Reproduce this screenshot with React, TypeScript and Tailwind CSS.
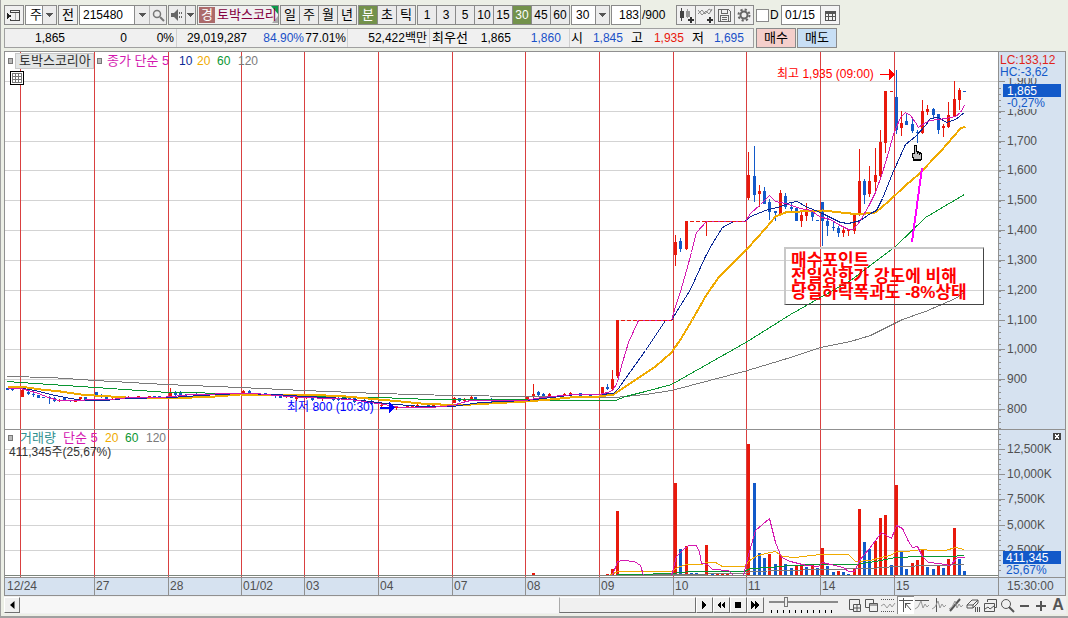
/**
 * Intraday stock chart window: period toolbar, quote strip, price/volume panes and the
 * scroll bar with drawing tools under them.
 */

import type { ReactNode } from 'react';

type Point = [number, number];
// x, high, body top, body bottom, low, up?
type Candle = [number, number, number, number, number, 0 | 1];

const UP = '#e8190c';
const DOWN = '#1259c9';
const MAGENTA = '#d419b0';
const NAVY = '#0a2896';
const GOLD = '#f0aa00';
const GREEN = '#0a9632';
const GRAY = '#7a7a7a';

const PRICES = [1900, 1800, 1700, 1600, 1500, 1400, 1300, 1200, 1100, 1000, 900, 800];
const VOLUMES = ['12,500K', '10,000K', '7,500K', '5,000K', '2,500K'];

const DAYS = [
  { x: 20, label: '12/24' },
  { x: 94, label: '27' },
  { x: 168, label: '28' },
  { x: 241, label: '01/02' },
  { x: 304, label: '03' },
  { x: 378, label: '04' },
  { x: 452, label: '07' },
  { x: 525, label: '08' },
  { x: 599, label: '09' },
  { x: 673, label: '10' },
  { x: 746, label: '11' },
  { x: 820, label: '14' },
  { x: 894, label: '15' },
];

const CANDLES: Candle[] = [
  [7, 388, 388, 390, 390, 0], [12, 389, 389, 390, 391, 0], [22, 390, 390, 397, 397, 1],
  [28, 391, 392, 394, 395, 0], [33, 393, 394, 395, 397, 0], [38, 395, 395, 398, 398, 0],
  [43, 397, 397, 398, 398, 0], [49, 396, 397, 398, 404, 0], [54, 397, 398, 401, 402, 0],
  [59, 399, 400, 401, 402, 1], [64, 398, 398, 401, 401, 0], [70, 400, 400, 401, 402, 0],
  [75, 399, 400, 402, 402, 1], [80, 397, 397, 399, 400, 1], [85, 397, 397, 401, 401, 0],
  [96, 392, 392, 396, 397, 0], [101, 394, 395, 397, 398, 0], [106, 395, 396, 401, 401, 0],
  [112, 396, 397, 398, 399, 1], [122, 396, 396, 398, 398, 0], [128, 396, 397, 398, 398, 1],
  [138, 396, 396, 397, 398, 1], [149, 396, 396, 398, 398, 1], [154, 396, 396, 398, 398, 0],
  [159, 396, 396, 398, 398, 0], [170, 388, 393, 399, 399, 1], [175, 391, 392, 395, 396, 0],
  [180, 391, 393, 395, 396, 0], [186, 394, 394, 395, 396, 0], [196, 393, 394, 396, 397, 0],
  [206, 393, 393, 395, 396, 0], [217, 393, 393, 395, 395, 1], [227, 393, 394, 395, 395, 1],
  [233, 393, 394, 395, 395, 1], [243, 390, 391, 393, 394, 1], [249, 390, 391, 394, 395, 0],
  [254, 393, 393, 394, 394, 1], [265, 393, 393, 395, 396, 0], [275, 394, 395, 396, 398, 0],
  [280, 394, 395, 398, 398, 0], [286, 396, 396, 397, 398, 1], [291, 396, 396, 398, 398, 0],
  [296, 394, 395, 399, 401, 1], [306, 396, 397, 398, 399, 1], [312, 397, 398, 400, 401, 0],
  [322, 396, 397, 399, 401, 1], [333, 397, 398, 400, 401, 0], [338, 397, 398, 400, 401, 0],
  [349, 397, 397, 399, 399, 0], [354, 397, 398, 402, 403, 0], [364, 399, 400, 402, 403, 0],
  [371, 400, 401, 404, 405, 0], [381, 402, 405, 406, 407, 1], [396, 407, 407, 408, 410, 1],
  [407, 405, 406, 407, 408, 1], [412, 405, 406, 407, 408, 1], [417, 404, 405, 408, 408, 1],
  [428, 405, 405, 407, 407, 0], [433, 404, 405, 408, 408, 1], [443, 405, 405, 407, 407, 1],
  [454, 397, 398, 403, 403, 1], [459, 398, 398, 401, 402, 0], [464, 398, 399, 401, 402, 1],
  [471, 396, 397, 400, 400, 1], [475, 397, 397, 400, 400, 0], [481, 399, 399, 401, 401, 1],
  [491, 398, 399, 401, 402, 0], [502, 399, 399, 401, 401, 1], [512, 399, 399, 401, 401, 0],
  [527, 396, 396, 402, 402, 1], [533, 384, 394, 397, 398, 1], [538, 391, 392, 395, 396, 0],
  [543, 393, 394, 396, 397, 0], [549, 393, 394, 396, 397, 1], [564, 393, 394, 395, 396, 1],
  [570, 392, 393, 395, 395, 1], [580, 393, 393, 396, 396, 0], [590, 394, 395, 396, 396, 0],
  [602, 387, 387, 394, 394, 1], [607, 384, 387, 389, 390, 0], [612, 370, 379, 389, 390, 1],
  [617, 320, 320, 376, 378, 1], [675, 235, 242, 255, 266, 1], [680, 238, 241, 249, 252, 0],
  [686, 221, 221, 249, 250, 1], [706, 221, 221, 222, 236, 1], [748, 152, 175, 198, 200, 1],
  [754, 146, 176, 195, 202, 0], [759, 185, 191, 194, 207, 1], [764, 187, 191, 204, 204, 0],
  [769, 199, 202, 212, 220, 0], [775, 211, 211, 213, 221, 0], [780, 190, 193, 214, 215, 1],
  [785, 193, 196, 207, 209, 0], [791, 202, 207, 209, 212, 0], [796, 208, 208, 221, 221, 0],
  [801, 211, 215, 221, 227, 1], [806, 203, 211, 216, 221, 1], [812, 211, 212, 217, 221, 0],
  [817, 220, 220, 221, 221, 0], [822, 202, 202, 221, 246, 0], [827, 217, 221, 226, 236, 0],
  [833, 222, 227, 228, 231, 0], [838, 226, 228, 233, 237, 0], [843, 226, 230, 233, 237, 1],
  [848, 229, 230, 231, 236, 1], [854, 213, 214, 231, 234, 1], [859, 149, 181, 215, 216, 1],
  [864, 179, 181, 195, 204, 0], [869, 166, 181, 194, 197, 1], [875, 148, 175, 182, 191, 1],
  [880, 130, 142, 176, 178, 1], [885, 91, 91, 143, 153, 1], [891, 91, 91, 92, 92, 1],
  [896, 70, 97, 130, 134, 0], [901, 111, 123, 128, 136, 1], [906, 114, 121, 125, 125, 0],
  [912, 118, 124, 131, 133, 0], [917, 130, 132, 133, 143, 0], [922, 100, 111, 133, 134, 1],
  [927, 105, 109, 112, 115, 1], [933, 108, 109, 115, 119, 0], [938, 114, 114, 130, 134, 0],
  [943, 124, 126, 128, 137, 1], [948, 102, 115, 127, 128, 1], [954, 81, 99, 116, 117, 1],
  [959, 88, 90, 100, 110, 1], [964, 91, 91, 92, 92, 0],
];

// x, bar top, up?
const BARS: [number, number, 0 | 1][] = [
  [533, 573, 1], [607, 574, 1], [612, 569, 1], [617, 511, 1], [622, 574, 0], [627, 574, 0],
  [633, 574, 0], [638, 574, 0], [675, 483, 1], [680, 549, 0], [686, 546, 1], [691, 573, 0],
  [696, 573, 0], [701, 574, 0], [706, 545, 1], [712, 574, 0], [717, 574, 1], [722, 574, 1],
  [727, 573, 1], [748, 444, 1], [754, 483, 0], [759, 553, 0], [764, 558, 0], [769, 554, 1],
  [775, 564, 0], [780, 555, 1], [785, 564, 0], [791, 568, 0], [796, 565, 1], [801, 564, 1],
  [806, 567, 0], [812, 565, 1], [817, 568, 0], [822, 548, 1], [827, 566, 0], [833, 572, 0],
  [838, 571, 1], [843, 572, 0], [848, 574, 0], [854, 568, 1], [859, 509, 1], [864, 542, 0],
  [869, 549, 0], [875, 541, 1], [880, 518, 1], [885, 515, 1], [891, 565, 0], [896, 485, 1],
  [901, 551, 0], [906, 569, 0], [912, 563, 1], [917, 560, 1], [922, 550, 1], [927, 567, 0],
  [933, 569, 0], [938, 566, 1], [943, 568, 0], [948, 559, 1], [954, 528, 1], [959, 559, 0],
  [964, 571, 0],
];

const MA5: Point[] = [
  [7, 388], [20, 388], [28, 390], [38, 393], [48, 397], [58, 400], [75, 400], [94, 399],
  [110, 399], [130, 397], [160, 397], [172, 396], [190, 394], [240, 393], [255, 393], [275, 395],
  [303, 397], [330, 398], [350, 399], [370, 402], [390, 405], [400, 407], [430, 407], [452, 405],
  [462, 402], [470, 400], [525, 400], [535, 398], [550, 396], [575, 394], [599, 394], [607, 392],
  [612, 390], [617, 382], [622, 362], [628, 342], [638, 320], [671, 320], [675, 306], [680, 291],
  [686, 270], [691, 252], [696, 232], [706, 221], [745, 221], [750, 213], [760, 204], [769, 195],
  [775, 201], [785, 203], [800, 208], [811, 210], [817, 215], [822, 217], [830, 219], [838, 224],
  [848, 229], [853, 229], [860, 220], [868, 206], [875, 192], [882, 172], [888, 152], [893, 134],
  [900, 117], [905, 112], [910, 115], [915, 122], [918, 127], [925, 122], [930, 120], [945, 118],
  [955, 116], [960, 112], [964, 105],
];
const MA10: Point[] = [
  [7, 388], [22, 388], [35, 390], [50, 394], [65, 397], [82, 400], [105, 400], [125, 398],
  [170, 397], [200, 395], [240, 393], [275, 394], [303, 396], [330, 397], [352, 399], [370, 401],
  [385, 403], [420, 406], [452, 406], [480, 402], [525, 400], [560, 396], [575, 394], [599, 394],
  [613, 393], [618, 388], [625, 378], [645, 350], [665, 320], [671, 320], [680, 305], [690, 289],
  [705, 256], [712, 243], [722, 227], [733, 221], [744, 221], [750, 216], [765, 210], [780, 206],
  [790, 202], [797, 201], [805, 206], [815, 210], [822, 213], [830, 217], [840, 222], [848, 223],
  [860, 220], [870, 213], [876, 210], [882, 198], [892, 173], [905, 144], [915, 136], [925, 125],
  [930, 118], [938, 117], [946, 122], [955, 119], [964, 112],
];
const MA20: Point[] = [
  [7, 386], [20, 386], [40, 389], [60, 391], [80, 394], [94, 395], [110, 396], [125, 397],
  [168, 398], [215, 396], [240, 394], [303, 394], [325, 395], [345, 396], [378, 399], [400, 401],
  [420, 403], [440, 404], [470, 404], [525, 401], [550, 399], [570, 397], [599, 396], [613, 394],
  [625, 386], [640, 376], [655, 366], [671, 352], [680, 339], [692, 319], [705, 296], [718, 277],
  [735, 260], [747, 248], [765, 228], [775, 216], [785, 212], [800, 211], [822, 210], [850, 213],
  [865, 213], [875, 212], [888, 201], [905, 185], [918, 174], [940, 151], [960, 128], [965, 126],
];
const MA60: Point[] = [
  [7, 381], [20, 382], [95, 387], [168, 392], [240, 393], [303, 396], [378, 397], [430, 399],
  [525, 399], [560, 400], [615, 400], [625, 396], [645, 391], [671, 384], [747, 341], [790, 314],
  [820, 297], [850, 280], [895, 246], [925, 217], [947, 204], [964, 194],
];
const MA120: Point[] = [
  [7, 376], [50, 377], [95, 380], [165, 384], [240, 387], [303, 390], [378, 393], [452, 395],
  [525, 396], [599, 397], [615, 397], [645, 394], [671, 390], [747, 370], [790, 357], [820, 347],
  [850, 341], [870, 335], [902, 319], [925, 311], [955, 298], [964, 292],
];

const VOL5: Point[] = [
  [599, 575], [612, 575], [617, 561], [622, 560], [634, 561], [640, 565], [643, 575], [671, 575],
  [676, 556], [682, 550], [688, 545], [696, 545], [699, 552], [701, 563], [707, 564], [712, 569],
  [728, 570], [733, 575], [743, 575], [747, 558], [755, 530], [769, 518], [775, 542], [781, 557],
  [790, 561], [806, 565], [818, 566], [822, 562], [830, 564], [843, 567], [848, 571], [854, 571],
  [859, 560], [869, 548], [881, 532], [891, 538], [896, 525], [902, 528], [908, 541], [912, 547],
  [917, 546], [922, 556], [928, 562], [938, 563], [950, 565], [957, 557], [964, 557],
];
const VOL20: Point[] = [
  [610, 574], [618, 571], [671, 571], [677, 567], [686, 564], [701, 564], [706, 562], [715, 562],
  [722, 566], [744, 566], [748, 561], [755, 556], [765, 553], [775, 551], [782, 556], [795, 557],
  [810, 555], [822, 554], [848, 554], [855, 561], [870, 560], [880, 557], [890, 555], [896, 551],
  [905, 551], [922, 549], [930, 550], [945, 550], [955, 547], [964, 549],
];
const VOL60: Point[] = [
  [599, 575], [671, 573], [690, 571], [744, 571], [750, 568], [770, 567], [790, 565], [820, 564],
  [855, 564], [875, 561], [895, 557], [920, 556], [950, 556], [964, 555],
];
const VOL120: Point[] = [
  [599, 575], [671, 574], [744, 573], [750, 571], [820, 569], [870, 568], [895, 566], [935, 565],
  [964, 564],
];

const priceY = (p: number) => Math.round(409 - (p - 800) * 0.2982);
const volumeY = (i: number) => Math.round(449 + i * 25.2);

function Line({ points, color, width = 1 }: { points: Point[]; color: string; width?: number }) {
  return (
    <polyline
      points={points.map(([x, y]) => `${x + 0.5},${y + 0.5}`).join(' ')}
      fill="none"
      stroke={color}
      strokeWidth={width}
    />
  );
}

function Plot() {
  return (
    <svg className="block w-full h-[525px]" shapeRendering="crispEdges" role="img" aria-label="토박스코리아 차트">
      <g transform="translate(-5 -52)">
        {PRICES.map((p) => (
          <rect key={p} x="5" y={priceY(p)} width="100%" height="1" fill="#d3d3d3" />
        ))}
        {VOLUMES.map((v, i) => (
          <rect key={v} x="5" y={volumeY(i)} width="100%" height="1" fill="#d3d3d3" />
        ))}
        {DAYS.map((d) => (
          <rect key={d.x} x={d.x} y="52" width="1" height="525" fill="#d94040" />
        ))}
        <rect x="5" y="429" width="100%" height="1" fill="#909090" />

        {CANDLES.map(([x, high, top, bottom, low, up]) => (
          <g key={x} fill={up ? UP : DOWN}>
            <rect x={x} y={high} width="1" height={low - high} />
            <rect x={x - 1} y={top} width="3" height={bottom - top} />
          </g>
        ))}

        <Line points={MA120} color={GRAY} />
        <Line points={MA60} color={GREEN} />
        <Line points={MA20} color={GOLD} width={2} />
        <Line points={MA10} color={NAVY} />
        <Line points={MA5} color={MAGENTA} />
        <path d="M621 320.500H672M690 221.500H745" stroke={UP} strokeDasharray="4 2" />

        {BARS.map(([x, top, up]) => (
          <rect key={x} x={x - 1} y={top} width="3" height={576 - top} fill={up ? UP : DOWN} />
        ))}
        <Line points={VOL120} color={GRAY} />
        <Line points={VOL60} color={GREEN} />
        <Line points={VOL20} color={GOLD} />
        <Line points={VOL5} color={MAGENTA} />
        <rect x="5" y="575" width="100%" height="1" fill="#7d857d" />

        {/* high / low markers */}
        <path d="M880 74.500h9" stroke="#ff0000" />
        <path d="M889 69l6 5.500-6 5.500z" fill="#ff0000" />
        <path d="M380 407.500h9" stroke="#0000ff" strokeWidth="2" />
        <path d="M389 402l6 5.500-6 5.500z" fill="#0000ff" />
        <text x="777" y="78" fill="#ff0000">최고 1,935 (09:00)</text>
        <text x="287" y="411" fill="#0000ff">최저 800 (10:30)</text>

        <path d="M922 168L912 242" stroke="#ff00ff" strokeWidth="2" />

        {/* hand pointer */}
        <path
          d="M914.500 145.500h2v6l4 1 1 2v4l-1 2h-6l-2-4v-3h2z"
          fill="#c0c0c0"
          stroke="#000"
        />
        <path d="M917.500 152v2M919.500 153v2" stroke="#000" />
        <rect x="913" y="159" width="8" height="2" fill="#000" />
      </g>
    </svg>
  );
}

function Axis() {
  const minor: number[] = [];
  for (let y = 88; y < 428; y += 5.96) minor.push(Math.round(y));
  for (let y = 434; y < 575; y += 5.04) minor.push(Math.round(y));
  return (
    <svg className="block w-full h-[525px]" shapeRendering="crispEdges">
      <g transform="translate(-1000 -52)" fill="#505050">
        {minor.map((y) => (
          <rect key={y} x="1000" y={y} width="2" height="1" fill="#909090" />
        ))}
        {PRICES.map((p) => (
          <g key={p}>
            <rect x="1000" y={priceY(p)} width="6" height="1" fill="#909090" />
            <text x="1008" y={priceY(p) + 4}>{p.toLocaleString('en-US')}</text>
          </g>
        ))}
        {VOLUMES.map((v, i) => (
          <g key={v}>
            <rect x="1000" y={volumeY(i)} width="6" height="1" fill="#909090" />
            <text x="1008" y={volumeY(i) + 4}>{v}</text>
          </g>
        ))}
        <rect x="1000" y="429" width="66" height="1" fill="#909090" />

        <rect x="1000" y="53" width="64" height="25" fill="#d6e2f0" />
        <text x="1001" y="64" fill="#e0241a">LC:133,12</text>
        <text x="1001" y="76" fill="#1259c9">HC:-3,62</text>
        <rect x="1006" y="97" width="56" height="12" fill="#d6e2f0" />
        <rect x="1004" y="84" width="58" height="13" fill="#1259c9" />
        <text x="1008" y="95" fill="#fff">1,865</text>
        <text x="1008" y="107" fill="#1259c9">-0,27%</text>

        <rect x="1006" y="564" width="56" height="13" fill="#d6e2f0" />
        <rect x="1004" y="551" width="58" height="13" fill="#1259c9" />
        <text x="1007" y="562" fill="#fff">411,345</text>
        <text x="1007" y="574" fill="#1259c9">25,67%</text>

        <rect x="1054" y="433" width="8" height="7" fill="#444" />
        <path d="M1056 434.500l4 4M1060 434.500l-4 4" stroke="#fff" />
      </g>
    </svg>
  );
}

function IconButton({ label, className = '', children }: { label: string; className?: string; children: ReactNode }) {
  return (
    <button
      aria-label={label}
      className={`flex items-center justify-center h-5 bg-[#f0f0f0] border border-[#8a8a8a] ${className}`}
    >
      {children}
    </button>
  );
}

function Arrow() {
  return (
    <svg width="7" height="4" viewBox="0 0 7 4" fill="#555" shapeRendering="crispEdges">
      <path d="M0 0h7L3.500 4z" />
    </svg>
  );
}

function Combo({ label, value, className }: { label: string; value: string; className: string }) {
  return (
    <div className={`relative h-5 border border-[#8a8a8a] bg-white ${className}`}>
      <select
        aria-label={label}
        defaultValue={value}
        className="appearance-none block w-full h-full pl-1 leading-[18px] text-black bg-transparent outline-none"
      >
        <option>{value}</option>
      </select>
      <span className="pointer-events-none absolute right-0 top-0 flex items-center justify-center w-[14px] h-full bg-[#ececec] border-l border-[#8a8a8a]">
        <Arrow />
      </span>
    </div>
  );
}

function Segments({ items, active }: { items: string[]; active?: string }) {
  return (
    <div className="flex h-5 border-y border-r border-[#8a8a8a]">
      {items.map((t) => (
        <button
          key={t}
          className={`w-[19px] border-l border-[#8a8a8a] text-center leading-[18px] ${
            t === active ? 'bg-[#73924b] text-white' : 'bg-[#ebebeb] text-black'
          }`}
        >
          {t}
        </button>
      ))}
    </div>
  );
}

function Toolbar() {
  return (
    <div className="flex items-center gap-px pt-[5px] text-black">
      <IconButton label="창 목록" className="w-5">
        <svg className="shrink-0" width="14" height="13" viewBox="0 0 14 13" shapeRendering="crispEdges">
          <path d="M3.500 3V1.500h9v10h-9V10M3 3.500h9" fill="none" stroke="#444" />
          <path d="M8.500 4v7" stroke="#aaa" />
          <path d="M0 4l5 3-5 3z" fill="#222" />
        </svg>
      </IconButton>
      <Combo label="시장" value="주" className="w-8 text-[13px]" />
      <button className="w-5 h-5 text-[13px] leading-[18px] bg-[#f0f0f0] border border-[#8a8a8a]">전</button>
      <div className="flex h-5 w-[88px] border border-[#8a8a8a] bg-white">
        <input aria-label="종목코드" defaultValue="215480" className="w-[54px] pl-[3px] outline-none" />
        <button aria-label="최근 종목" className="flex items-center justify-center w-[15px] bg-[#ececec] border-l border-[#8a8a8a]">
          <Arrow />
        </button>
        <button aria-label="종목 검색" className="flex flex-1 items-center justify-center bg-[#ececec] border-l border-[#b5b5b5]">
          <svg width="13" height="13" viewBox="0 0 13 13" fill="none" stroke="#777">
            <circle cx="5" cy="5" r="3.500" strokeWidth="1.500" />
            <path d="M8 8l4 4" strokeWidth="2" />
          </svg>
        </button>
      </div>
      <div className="flex h-5 w-7 border border-[#8a8a8a] bg-[#ececec]">
        <button aria-label="소리" className="flex flex-1 items-center justify-center">
          <svg width="13" height="12" viewBox="0 0 13 12" fill="#666">
            <path d="M0 4h3l4-4v12l-4-4H0z" />
            <path d="M8 3h1v2H8zM10 3h1v2h-1zM8 7h1v2H8zM10 7h1v2h-1z" />
          </svg>
        </button>
        <button aria-label="소리 설정" className="flex items-center justify-center w-[10px] border-l border-[#8a8a8a]">
          <Arrow />
        </button>
      </div>
      <div className="relative flex items-center w-[82px] h-5 pl-px text-[13px] border border-[#8a8a8a] bg-[#f0f0f0]">
        <span className="w-4 h-4 shrink-0 text-center leading-4 text-white bg-[#ac6b6b]">경</span>
        <svg className="absolute right-0 top-0" width="7" height="18" viewBox="0 0 7 18">
          <path d="M0 0h7v8z" fill="#0a9a4a" />
          <path d="M7 10v7H1z" fill="#aaa" />
        </svg>
        <input aria-label="종목명" defaultValue="토박스코리" className="relative min-w-0 flex-1 pl-[2px] bg-transparent text-[#85003f] outline-none" />
      </div>
      <div className="text-[13px]">
        <Segments items={['일', '주', '월', '년']} />
      </div>
      <div className="text-[13px]">
        <Segments items={['분', '초', '틱']} active="분" />
      </div>
      <Segments items={['1', '3', '5', '10', '15', '30', '45', '60']} active="30" />
      <Combo label="분 단위" value="30" className="w-[39px]" />
      <input aria-label="표시 개수" defaultValue="183" className="w-[30px] h-5 pr-px leading-[18px] text-right bg-white border border-[#8a8a8a] outline-none" />
      <span className="w-[33px]">/900</span>
      <div className="flex">
        <IconButton label="봉 추가" className="w-[20px]">
          <svg className="shrink-0" width="15" height="15" viewBox="0 0 15 15" shapeRendering="crispEdges">
            <path d="M1 3h4v7H1zM2 0h1v13H2z" fill="#444" />
            <path d="M7 3h4v6H7zM8 1h1v9H8z" fill="#999" />
            <path d="M12 9v6M9 12h6" stroke="#333" strokeWidth="2" />
          </svg>
        </IconButton>
        <IconButton label="지표 추가" className="w-[19px] border-l-0">
          <svg className="shrink-0" width="15" height="15" viewBox="0 0 15 15" fill="none">
            <path d="M0 6l4-4 3 4 4-5 3 2M0 2l4 5 4-4 3 3 3-5" stroke="#888" />
            <path d="M12 9v6M9 12h6" stroke="#333" strokeWidth="2" />
          </svg>
        </IconButton>
        <IconButton label="저장" className="w-[20px] border-l-0">
          <svg className="shrink-0" width="15" height="15" viewBox="0 0 15 15" fill="none" stroke="#666" shapeRendering="crispEdges">
            <path d="M1.500 1.500h10l2 2v10h-12zM4.500 1.500v4h6v-4M3.500 13.500v-6h8v6M5 9.500h5M5 11.500h5" />
          </svg>
        </IconButton>
        <IconButton label="설정" className="w-[19px] border-l-0">
          <svg className="shrink-0" width="14" height="14" viewBox="0 0 14 14" fill="none" stroke="#666">
            <circle cx="7" cy="7" r="3.500" strokeWidth="2" />
            <circle cx="7" cy="7" r="5.500" strokeWidth="2" strokeDasharray="2.200 2.120" />
          </svg>
        </IconButton>
      </div>
      <label className="flex items-center gap-px w-[25px] pl-px">
        <input type="checkbox" className="appearance-none w-[13px] h-[13px] bg-white border border-[#8a8a8a]" />
        D
      </label>
      <div className="flex h-5 w-[59px] border border-[#8a8a8a] bg-white">
        <input aria-label="기준일" defaultValue="01/15" className="w-[38px] pl-[3px] outline-none" />
        <button aria-label="달력" className="flex flex-1 items-center justify-center bg-[#f4f4f4] border-l border-[#8a8a8a]">
          <svg width="11" height="11" viewBox="0 0 11 11" shapeRendering="crispEdges">
            <path d="M.5 2.500h10v8H.5zM.5 6.500h10M3.500 3v7M7.500 3v7" fill="none" stroke="#555" />
            <path d="M0 1h11v3H0z" fill="#555" />
          </svg>
        </button>
      </div>
    </div>
  );
}

function QuoteStrip() {
  return (
    <div className="flex gap-[2px] mt-[3px] text-black leading-[18px]">
      <div className="flex w-[750px] h-5 bg-[#f0f0f0] border border-[#a0a0a0] whitespace-nowrap">
        <div className="flex w-[172px] pr-[2px] border-r border-[#d0d0d0] text-right">
          <span className="w-[60px]">1,865</span>
          <span className="w-[62px]">0</span>
          <span className="flex-1">0%</span>
        </div>
        <div className="flex w-[171px] pr-px border-r border-[#d0d0d0] text-right">
          <span className="w-[70px]">29,019,287</span>
          <span className="w-[57px] text-[#1a50c8]">84.90%</span>
          <span className="flex-1">77.01%</span>
        </div>
        <div className="w-[82px] pr-[2px] border-r border-[#d0d0d0] text-right">52,422백만</div>
        <div className="flex w-[140px] pl-[2px] border-r border-[#d0d0d0] text-right">
          <span className="text-[13px]">최우선</span>
          <span className="w-[43px]">1,865</span>
          <span className="w-[50px] text-[#1a50c8]">1,860</span>
        </div>
        <div className="flex pl-px text-right">
          <span className="text-[13px]">시</span>
          <span className="w-[40px] text-[#1a50c8]">1,845</span>
          <span className="w-[20px] text-[13px]">고</span>
          <span className="w-[41px] text-[#e8190c]">1,935</span>
          <span className="w-[20px] text-[13px]">저</span>
          <span className="w-[40px] text-[#1a50c8]">1,695</span>
        </div>
      </div>
      <div className="flex gap-px text-[13px]">
        <button className="w-10 h-5 bg-[#f5cfcb] border border-[#8a8a8a]">매수</button>
        <button className="w-10 h-5 bg-[#c8dff5] border border-[#8a8a8a]">매도</button>
      </div>
    </div>
  );
}

function Marker() {
  return <span className="w-[5px] h-[6px] bg-[#bbb] border border-[#777]" />;
}

function Chart() {
  return (
    <div className="flex mt-[3px] mr-[2px] border border-[#909090] bg-white">
      <div className="relative flex-1 min-w-0 overflow-hidden">
        <Plot />
        <div className="absolute left-[3px] top-px flex items-center h-4 whitespace-nowrap">
          <Marker />
          <span className="ml-[2px] w-[79px] h-4 px-[3px] text-[13px] leading-[14px] text-[#333] bg-[#e3e6e6] border border-[#c8c8c8]">토박스코리아</span>
          <span className="flex ml-[3px]"><Marker /></span>
          <span className="ml-[5px] w-[72px] text-[13px] text-[#d419b0]">종가 단순 5</span>
          <span className="w-[18px] text-[#0a2896]">10</span>
          <span className="w-[20px] text-[#f0aa00]">20</span>
          <span className="w-[21px] text-[#0a9632]">60</span>
          <span className="text-[#7a7a7a]">120</span>
        </div>
        <button aria-label="데이터 표" className="absolute left-[5px] top-[19px] w-[14px] h-[14px] bg-white border border-black">
          <svg width="12" height="12" viewBox="0 0 12 12" fill="none" stroke="#777" shapeRendering="crispEdges">
            <path d="M1.500 1.500h9v9h-9zM1.500 4.500h9M1.500 7.500h9M4.500 1.500v9M7.500 1.500v9" />
          </svg>
        </button>
        <div className="absolute left-[3px] top-[378px] flex items-center h-4 whitespace-nowrap">
          <Marker />
          <span className="ml-[7px] w-[43px] text-[13px] text-[#2f9090]">거래량</span>
          <span className="w-[42px] text-[13px] text-[#d419b0]">단순 5</span>
          <span className="w-[20px] text-[#f0aa00]">20</span>
          <span className="w-[21px] text-[#0a9632]">60</span>
          <span className="text-[#7a7a7a]">120</span>
        </div>
        <div className="absolute left-1 top-[392px] leading-4 text-[#333]">411,345주(25,67%)</div>
        <div className="absolute left-[779px] top-[195px] w-[200px] h-[58px] pl-[5px] pt-1 text-[17px] leading-4 font-bold whitespace-nowrap text-[#f00] border-t-2 border-l-2 border-b border-r border-t-[#c8c8c8] border-l-[#c8c8c8] border-b-[#444] border-r-[#444]">
          매수포인트
          <br />
          전일상한가 강도에 비해
          <br />
          당일하락폭과도 -8%상태
        </div>
        <div className="relative h-[18px] border-t border-[#909090] bg-[#d6e2f0] text-[#505050] leading-4">
          {DAYS.map((d, i) => (
            <span
              key={d.x}
              className={`absolute top-0 h-full pl-px ${i ? 'border-l border-[#909090]' : ''}`}
              style={{ left: i ? d.x - 5 : 1 }}
            >
              {d.label}
            </span>
          ))}
        </div>
      </div>
      <div className="w-[67px] bg-[#d6e2f0] border-l border-[#909090]">
        <Axis />
        <div className="h-[18px] pl-2 border-t border-[#909090] text-[#505050] leading-4">15:30:00</div>
      </div>
    </div>
  );
}

const PLAYBACK = [
  { label: '오른쪽으로', d: 'M5 3l5 4-5 4z' },
  { label: '뒤로', d: 'M7 3v8L3 7zM11 3v8L7 7z' },
  { label: '정지', d: 'M4 4h6v6H4z' },
  { label: '앞으로', d: 'M3 3l4 4-4 4zM7 3l4 4-4 4z' },
];

const WAVE = 'M0 11l3-2 3-6 2 7 2-4 2 3 2-2';

const TOOLS: { label: string; on?: boolean; icon: ReactNode }[] = [
  { label: '차트 추가', icon: <path d="M12.500 6V1.500h-10v10h4M6.500 6.500h7v7h-7zM10 6.500v7M6.500 10h7" /> },
  { label: '차트 겹침', icon: <path d="M5 9.500H1.500v-8h8V5M5.500 5.500h8v8h-8zM6 7h7" /> },
  {
    label: '구간',
    icon: (
      <>
        <path d="M0 1.500h14M0 13.500h14" strokeDasharray="1 1" />
        <path d="M0 8l3-2 3 4 3-4 2 3 3-4" stroke="#999" />
      </>
    ),
  },
  { label: '십자선', on: true, icon: <path d="M0 2.500h14M4.500 0v14M6 5l6 7M6.500 10V5.500h5" /> },
  { label: '수평선', icon: <><path d="M0 2.500h14" /><path d={WAVE} stroke="#999" /></> },
  { label: '수직선', icon: <><path d="M4.500 0v14" /><path d={WAVE} stroke="#999" /></> },
  { label: '추세선', icon: <><path d="M1 13L11 1" strokeWidth="2" /><path d={WAVE} stroke="#999" /></> },
  { label: '지우기', icon: <path d="M1 7l5-5h6l-5 5zM1 7v3h6V7M7 10l5-5V2M9.500 9v5M11.500 9v5M13.500 9v5" /> },
  { label: '차트 저장', icon: <path d="M4.500 4V1.500h9v8h-2M1.500 5.500h10v8h-10zM2 11l3-2 2 2 4-3" /> },
  { label: '돋보기', icon: <><circle cx="6" cy="6" r="4.500" /><path d="M9 9l5 5" strokeWidth="2" /></> },
  { label: '축소', icon: <path d="M3 8h9" strokeWidth="2" /> },
  { label: '확대', icon: <path d="M2 8h10M7 3v10" strokeWidth="2" /> },
];

function BottomBar() {
  return (
    <div className="flex items-center h-[18px] mr-[2px] bg-[#f0f0f0] text-black">
      <button aria-label="왼쪽으로" className="flex items-center justify-center w-4 h-4 bg-[#f0f0f0] border border-t-white border-l-white border-b-[#707070] border-r-[#707070]">
        <svg width="5" height="8" viewBox="0 0 5 8"><path d="M4.500 0v8L0 4z" /></svg>
      </button>
      <div className="flex justify-end flex-1 h-4 bg-[#f7f7f7]">
        <div className="w-[137px] h-4 bg-[#f0f0f0] border border-t-white border-l-[#aaa] border-b-[#707070] border-r-[#707070]" />
      </div>
      <div className="flex">
        {PLAYBACK.map((b) => (
          <button
            key={b.label}
            aria-label={b.label}
            className="w-[17px] h-4 bg-[#f0f0f0] border border-t-white border-l-white border-b-[#707070] border-r-[#707070]"
          >
            <svg width="15" height="14" viewBox="0 0 15 14" shapeRendering="crispEdges"><path d={b.d} /></svg>
          </button>
        ))}
      </div>
      <div className="relative w-[69px] h-4 ml-[5px]">
        <svg className="absolute inset-0" width="69" height="16" shapeRendering="crispEdges">
          <rect y="4" width="69" height="2" fill="#8a8a8a" />
          {Array.from({ length: 11 }, (_, i) => (
            <rect key={i} x={2 + i * 6} y="13" width="1" height="3" />
          ))}
        </svg>
        <input
          type="range"
          aria-label="재생 속도"
          min="0"
          max="100"
          defaultValue="23"
          className="absolute left-0 top-0 w-full h-[10px] appearance-none bg-transparent [&::-webkit-slider-thumb]:appearance-none [&::-webkit-slider-thumb]:w-1 [&::-webkit-slider-thumb]:h-[10px] [&::-webkit-slider-thumb]:bg-[#eee] [&::-webkit-slider-thumb]:border [&::-webkit-slider-thumb]:border-[#777]"
        />
      </div>
      <div className="flex ml-2">
        {TOOLS.map((t) => (
          <button
            key={t.label}
            aria-label={t.label}
            className={`flex items-center justify-center w-[17px] h-[18px] ${t.on ? 'bg-white border-t border-l border-[#888]' : ''}`}
          >
            <svg className="shrink-0" width="15" height="15" viewBox="0 0 15 15" fill="none" stroke="#555">
              {t.icon}
            </svg>
          </button>
        ))}
        <button className="w-[16px] h-[18px] text-center text-base leading-[18px] font-bold text-[#555]">A</button>
      </div>
    </div>
  );
}

export default function App() {
  return (
    <main className="bg-[#ecefe6] border-l border-b-2 border-[#a0a0a0] pl-[3px] pb-[2px] font-['Liberation_Sans','Noto_Sans_CJK_KR',sans-serif] text-[12px] leading-4">
      <Toolbar />
      <QuoteStrip />
      <Chart />
      <BottomBar />
    </main>
  );
}
